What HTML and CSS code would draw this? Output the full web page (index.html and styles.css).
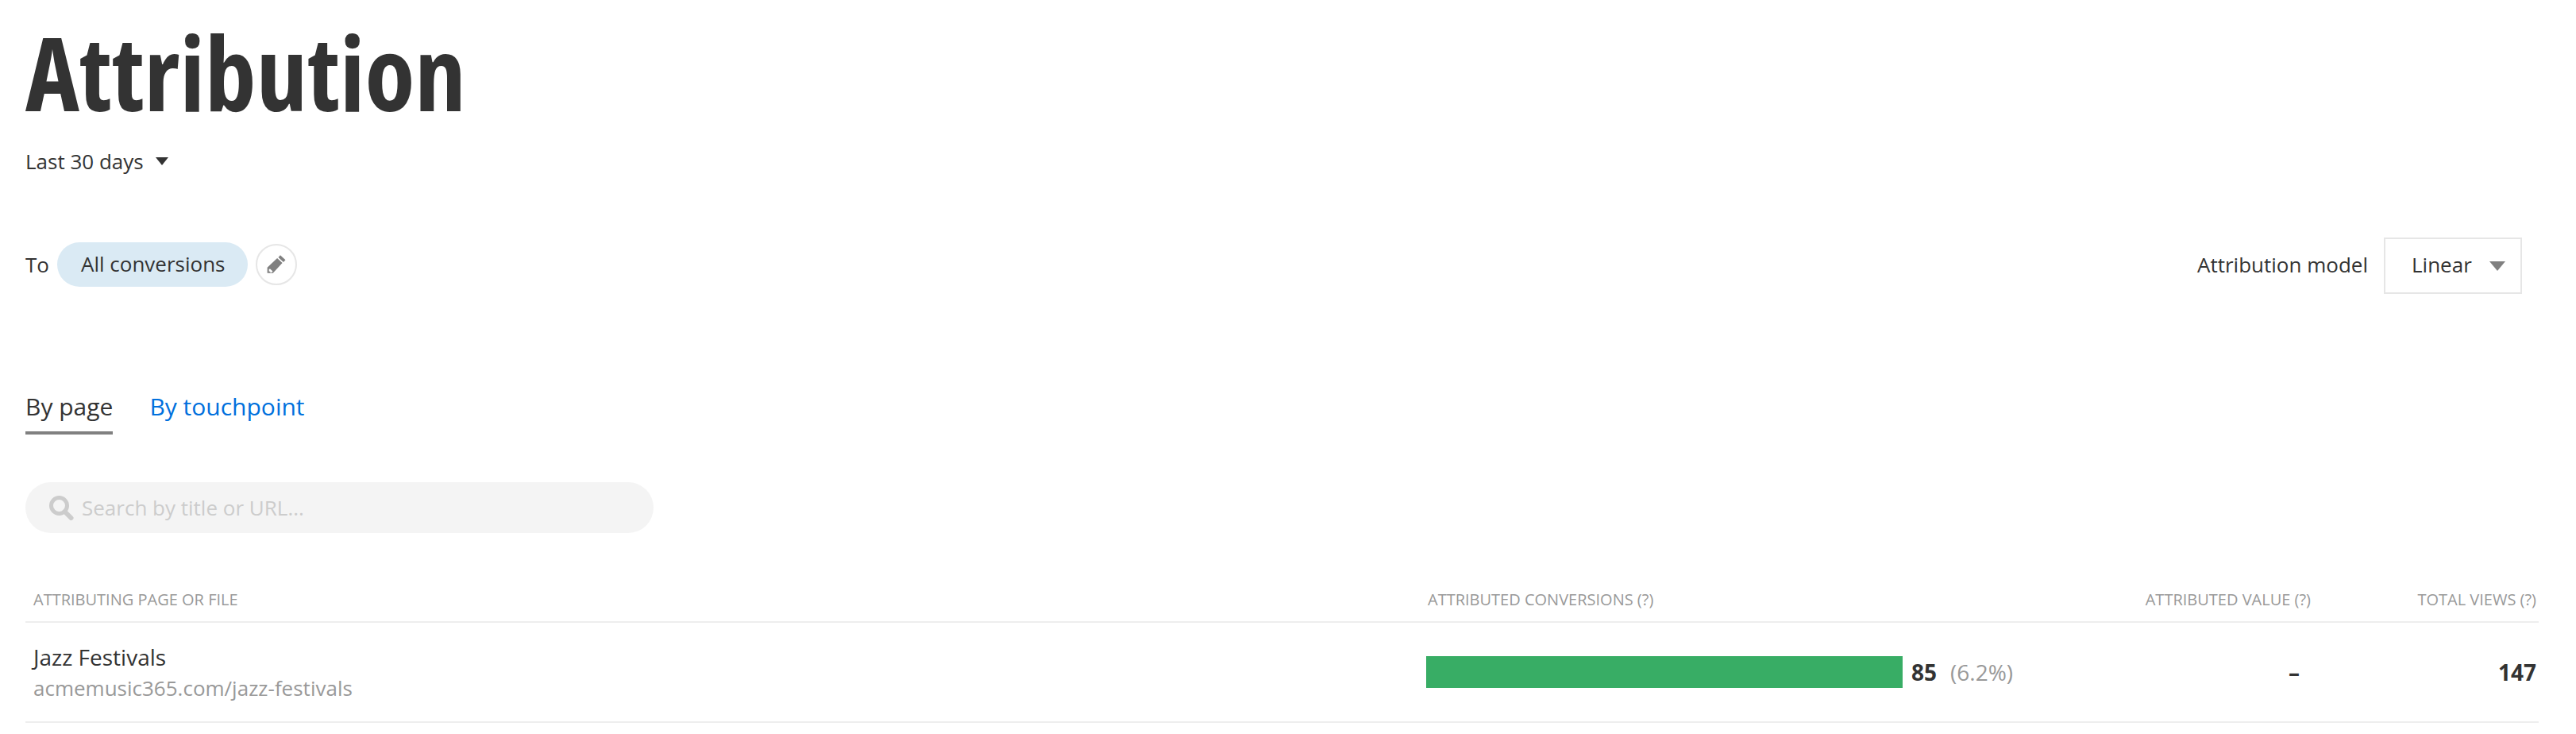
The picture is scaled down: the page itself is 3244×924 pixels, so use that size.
FILE: index.html
```html
<!DOCTYPE html>
<html lang="en">

<head>
  <meta charset="UTF-8">
  <title>Attribution</title>
  <link rel="stylesheet" href="styles.css">
</head>

<body>
  <div class="page">
    <h1 class="title">Attribution</h1>

    <div class="range">
      <span>Last 30 days</span>
      <span class="caret"></span>
    </div>

    <div class="filters">
      <div class="goal">
        <span>To</span>
        <span class="pill">All conversions</span>
        <span class="edit-btn">
          <svg width="26" height="26" viewBox="0 0 24 24">
            <path fill="#808080" d="M16.6 1.2l6 5.6-2.3 2.4-6-5.6zM13 4.6l6 5.6L8.1 22H1.5v-6.6zM3.4 17.2v2.9h1.5v1.2h1.6l1.3-1.4-3-2.9z" fill-rule="evenodd"/>
          </svg>
        </span>
      </div>
      <div class="model">
        <span>Attribution model</span>
        <div class="select">
          <span>Linear</span>
          <span class="caret caret-big"></span>
        </div>
      </div>
    </div>

    <div class="tabs">
      <a href="#" class="tab active">By page</a>
      <a href="#" class="tab">By touchpoint</a>
    </div>

    <div class="search">
      <svg width="32" height="32" viewBox="0 0 32 32">
        <circle cx="13.5" cy="13.5" r="10" fill="none" stroke="#cccccc" stroke-width="5"/>
        <path d="M20.5 21l8 8" stroke="#cccccc" stroke-width="6" stroke-linecap="round"/>
      </svg>
      <span>Search by title or URL...</span>
    </div>

    <div class="table">
      <div class="row head">
        <div class="cell">Attributing page or file</div>
        <div class="cell conversions-head">Attributed conversions (?)</div>
        <div class="cell right">Attributed value (?)</div>
        <div class="cell right">Total views (?)</div>
      </div>
      <div class="row body-row">
        <div class="cell">
          <div class="page-title">Jazz Festivals</div>
          <div class="page-url">acmemusic365.com/jazz-festivals</div>
        </div>
        <div class="cell conversions">
          <div class="bar"></div>
          <strong>85</strong>
          <span class="share">(6.2%)</span>
        </div>
        <div class="cell right dash">–</div>
        <div class="cell right"><strong>147</strong></div>
      </div>
    </div>
  </div>
</body>

</html>
```

FILE: styles.css
```css
* {
  margin: 0;
  padding: 0;
  box-sizing: border-box;
}

body {
  font-family: 'Open Sans', sans-serif;
  font-size: 26px;
  color: #333333;
  background: white;
}

.page {
  padding: 0 47px 0 32px;
}

.title {
  font-size: 129px;
  font-weight: 700;
  font-stretch: condensed;
  line-height: 180px;
  color: #333333;
}

.range {
  display: flex;
  align-items: center;
  gap: 15px;
  height: 40px;
  margin-top: 3px;
}

.caret {
  width: 0;
  height: 0;
  border-left: 8px solid transparent;
  border-right: 8px solid transparent;
  border-top: 10px solid #333333;
}

.caret-big {
  border-left-width: 10px;
  border-right-width: 10px;
  border-top: 12px solid #808080;
  margin-top: 4px;
}

.filters {
  display: flex;
  justify-content: space-between;
  align-items: center;
  margin-top: 76px;
  padding-right: 21px;
}

.goal {
  display: flex;
  align-items: center;
  padding-bottom: 3px;
}

.pill {
  background: #daeaf4;
  border-radius: 28px;
  height: 56px;
  line-height: 54px;
  padding: 0 29px 0 30px;
  margin-left: 10px;
}

.edit-btn {
  width: 52px;
  height: 52px;
  border: 2px solid #e6e6e6;
  border-radius: 50%;
  margin-left: 10px;
  display: flex;
  align-items: center;
  justify-content: center;
}

.model {
  display: flex;
  align-items: center;
  gap: 20px;
}

.model > span {
  padding-bottom: 3px;
}

.select {
  width: 174px;
  height: 71px;
  border: 2px solid #e6e6e6;
  display: flex;
  align-items: center;
  gap: 22px;
  padding: 0 0 3px 33px;
}

.tabs {
  display: flex;
  gap: 46px;
  margin-top: 103px;
}

.tab {
  font-size: 30px;
  color: #0070dd;
  text-decoration: none;
  height: 74px;
  padding-top: 8px;
  line-height: 62px;
}

.tab.active {
  color: #333333;
  border-bottom: 4px solid #808080;
}

.search {
  width: 791px;
  height: 64px;
  margin-top: 60px;
  background: #f4f4f4;
  border-radius: 32px;
  display: flex;
  align-items: center;
  gap: 10px;
  padding-left: 29px;
  color: #cccccc;
}

.table {
  margin-top: 68px;
}

.row {
  display: grid;
  grid-template-columns: 1754px 770px 357px 1fr;
  border-bottom: 2px solid #eeeeee;
}

.head {
  height: 45px;
  font-size: 20px;
  text-transform: uppercase;
  color: #999999;
  line-height: 32px;
}

.body-row {
  height: 126px;
  align-items: center;
  font-size: 28px;
}

.cell {
  padding: 0 10px;
}

.cell.right {
  text-align: right;
  padding-right: 3px;
}

.conversions-head {
  padding-left: 12px;
}

.page-title {
  line-height: 39px;
  margin-top: 1px;
}

.page-url {
  font-size: 26px;
  color: #999999;
  line-height: 39px;
}

.conversions {
  display: flex;
  align-items: center;
}

.bar {
  width: 600px;
  height: 40px;
  background: #38ad65;
  margin-right: 11px;
}

.share {
  color: #999999;
  margin-left: 17px;
}

.cell.dash {
  font-weight: 700;
  padding-right: 17px;
}
```
